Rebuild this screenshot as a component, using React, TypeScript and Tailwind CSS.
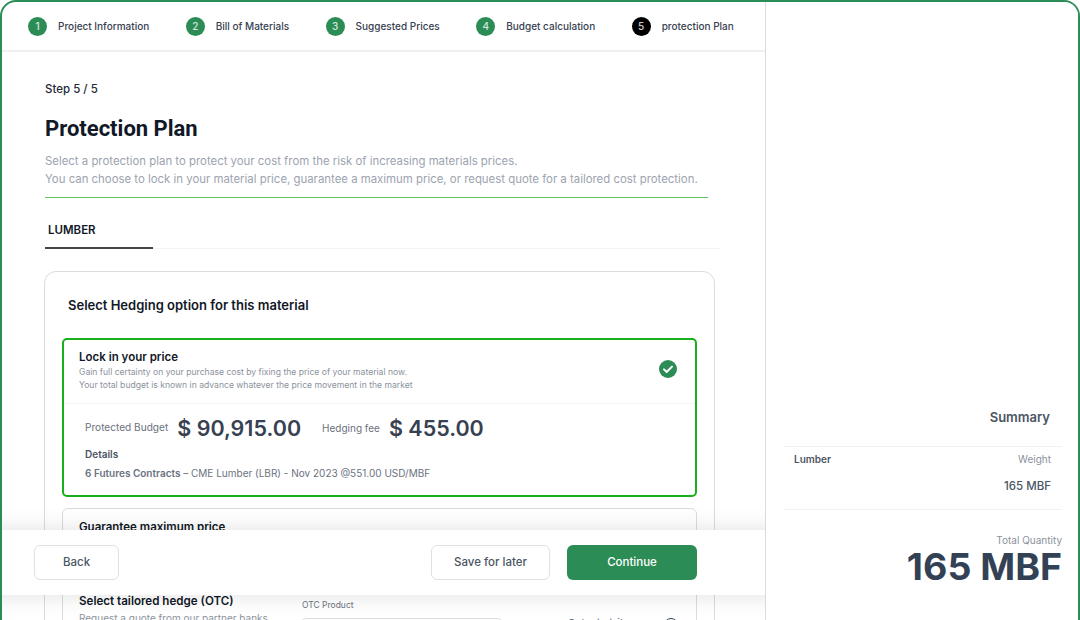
const STEPS = [
  { n: 1, label: "Project Information" },
  { n: 2, label: "Bill of Materials" },
  { n: 3, label: "Suggested Prices" },
  { n: 4, label: "Budget calculation" },
  { n: 5, label: "protection Plan", active: true },
];

function Stepper() {
  return (
    <div className="flex h-[50px] shrink-0 items-center gap-[36.5px] border-b-2 border-[#f0f0f0] pl-[26px]">
      {STEPS.map((s) => (
        <div key={s.n} className="flex items-center gap-[11px]">
          <div
            className={`flex h-[19px] w-[19px] items-center justify-center rounded-full text-[10px] font-medium text-white/80 ${
              s.active ? "bg-black" : "bg-[#2b8c55]"
            }`}
          >
            {s.n}
          </div>
          <span className="whitespace-nowrap text-[10px] font-medium text-[#374151]">
            {s.label}
          </span>
        </div>
      ))}
    </div>
  );
}

function CheckBadge() {
  return (
    <svg width="18" height="18" viewBox="0 0 18 18" className="mt-[10px]">
      <circle cx="9" cy="9" r="9" fill="#2b8c55" />
      <path
        d="M5 9.4l2.7 2.6L13 6.6"
        fill="none"
        stroke="white"
        strokeWidth="2"
        strokeLinecap="round"
        strokeLinejoin="round"
      />
    </svg>
  );
}

function LockCard() {
  return (
    <div className="h-[159px] rounded-[5px] border-2 border-[#1aae1a]">
      <div className="flex h-[64px] items-start justify-between border-b border-[#f3f4f6] pt-[10px] pr-[18px] pl-[15px]">
        <div>
          <p className="text-[11.5px] leading-[14px] font-semibold text-[#111827]">Lock in your price</p>
          <p className="mt-[2px] text-[8.6px] leading-[13px] text-[#8b929c]">
            Gain full certainty on your purchase cost by fixing the price of your material now.
            <br />
            Your total budget is known in advance whatever the price movement in the market
          </p>
        </div>
        <CheckBadge />
      </div>
      <div className="pl-[21px]">
        <div className="flex items-center pt-[10px]">
          <span className="text-[10.1px] text-[#6b7280]">Protected Budget</span>
          <span className="ml-[9px] text-[21.5px] leading-[28px] font-semibold text-[#374151]">$ 90,915.00</span>
          <span className="ml-[21px] text-[10px] text-[#6b7280]">Hedging fee</span>
          <span className="ml-[9px] text-[21.5px] leading-[28px] font-semibold text-[#374151]">$ 455.00</span>
        </div>
        <p className="mt-[6px] text-[10px] leading-[12px] font-semibold text-[#4b5563]">Details</p>
        <p className="mt-[7px] text-[10px] leading-[12px] text-[#6b7280]">
          <span className="font-semibold">6 Futures Contracts</span> – CME Lumber (LBR) - Nov 2023 @551.00 USD/MBF
        </p>
      </div>
    </div>
  );
}

function HedgeCard() {
  return (
    <div className="overflow-hidden rounded-t-xl border border-[#dcdcdc] px-[23px] pt-6">
      <h2 className="mb-[24px] text-[13px] leading-[18px] font-semibold text-[#111827]">
        Select Hedging option for this material
      </h2>
      <div className="-mx-[6px]">
        <LockCard />
        <div className="mt-[11px] h-[70px] rounded-md border border-[#dcdcdc] px-[16px] pt-[10px]">
          <p className="text-[11.5px] leading-[16px] font-semibold text-[#111827]">Guarantee maximum price</p>
        </div>
        <div className="mt-[8px] flex h-[80px] rounded-t-md border border-[#dcdcdc] px-[16px] pt-[6px]">
          <div className="w-[223px]">
            <p className="text-[11.6px] leading-[16px] font-semibold text-[#111827]">Select tailored hedge (OTC)</p>
            <p className="mt-[3px] text-[10px] leading-[12px] text-[#8b929c]">Request a quote from our partner banks</p>
          </div>
          <div className="w-[266px]">
            <p className="mt-[7px] text-[8.5px] leading-[10px] text-[#6b7280]">OTC Product</p>
            <div className="mt-[8px] h-[30px] w-[200px] rounded border border-[#dcdcdc]" />
          </div>
          <div className="mt-[24px] flex items-start">
            <span className="w-[96px] text-[11px] leading-[12px] text-[#6b7280]">Select strike</span>
            <span className="mt-[1px] h-[14px] w-[14px] rounded-full border border-[#374151]" />
          </div>
        </div>
      </div>
    </div>
  );
}

function FooterBar() {
  return (
    <div className="absolute top-[528px] right-[-30px] left-[-30px] flex h-[65px] items-center justify-between bg-white pr-[98px] pl-[62px] shadow-[0_0_24px_rgba(0,0,0,0.12)]">
      <button className="h-[35px] w-[85px] rounded-md border border-[#dfe1e5] text-[11.5px] font-medium text-[#4b5563]">
        Back
      </button>
      <div className="flex gap-[17px]">
        <button className="h-[35px] w-[119px] rounded-md border border-[#dfe1e5] text-[11.5px] font-medium text-[#4b5563]">
          Save for later
        </button>
        <button className="h-[35px] w-[130px] rounded-md bg-[#2b8c55] text-[11.5px] font-medium text-white">
          Continue
        </button>
      </div>
    </div>
  );
}

function Summary() {
  return (
    <div className="flex flex-1 flex-col bg-white pt-[406px] pr-[16px] pl-[17px]">
      <p className="pr-[12px] text-right text-[13px] leading-[18px] font-semibold text-[#4b5563]">Summary</p>
      <div className="mt-[20px] h-[64px] border-y border-[#f1f2f4] px-[11px] pt-[6px]">
        <div className="flex items-start justify-between">
          <span className="text-[10px] leading-[12px] font-semibold text-[#4b5563]">Lumber</span>
          <span className="text-[10px] leading-[13px] text-[#8b929c]">Weight</span>
        </div>
        <p className="mt-[13px] text-right text-[11.5px] leading-[14px] font-medium text-[#4b5563]">165 MBF</p>
      </div>
      <p className="mt-[24px] text-right text-[10px] leading-[13px] text-[#8b929c]">Total Quantity</p>
      <p className="text-right text-[37.5px] leading-[40px] font-bold text-[#334155]">165 MBF</p>
    </div>
  );
}

export default function App() {
  return (
    <div className="h-[620px] w-[1080px] overflow-hidden bg-white font-['Inter',sans-serif]">
      <div className="flex h-[640px] overflow-hidden rounded-t-2xl border-2 border-[#2b8c55]">
        <div className="relative flex w-[764px] shrink-0 flex-col overflow-hidden border-r border-[#dcdcdc]">
          <Stepper />
          <div className="pt-[29px] pl-[43px]">
            <p className="text-[11.5px] leading-[16px] font-medium text-[#1f2937]">Step 5 / 5</p>
            <h1 className="mt-[17px] font-['Roboto',sans-serif] text-[22px] leading-[30px] font-bold text-[#111827]">
              Protection Plan
            </h1>
            <p className="mt-[8px] text-[11.4px] leading-[18px] text-[#9ca3af]">
              Select a protection plan to protect your cost from the risk of increasing materials prices.
              <br />
              You can choose to lock in your material price, guarantee a maximum price, or request quote for a tailored cost protection.
            </p>
            <div className="mt-[9px] h-px w-[663px] bg-[#62c462]" />
            <div className="mt-[24px] w-[675px] border-b border-[#f3f4f6]">
              <div className="mb-[-1px] w-[108px] border-b-2 border-[#444444] pb-[9px] pl-[3px] text-[11.5px] leading-[16px] font-semibold text-[#111827]">
                LUMBER
              </div>
            </div>
            <div className="mt-[22px] ml-[-1px] w-[671px]">
              <HedgeCard />
            </div>
          </div>
          <FooterBar />
        </div>
        <Summary />
      </div>
    </div>
  );
}
